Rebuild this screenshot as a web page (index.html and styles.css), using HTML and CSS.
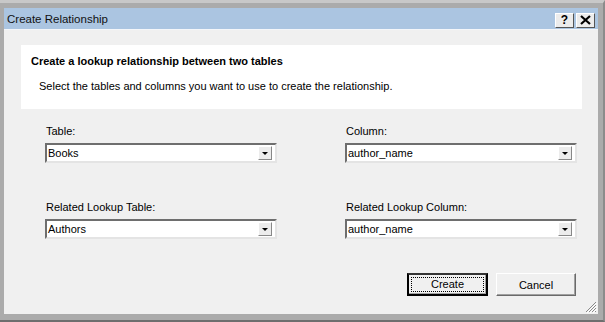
FILE: index.html
```html
<!DOCTYPE html>
<html lang="en">
<head>
    <meta charset="UTF-8">
    <title>Create Relationship</title>
    <link rel="stylesheet" href="styles.css">
</head>
<body>

    <div class="window">
        <div class="titlebar">
            <span class="title">Create Relationship</span>
            <div class="caption-buttons">
                <span class="cap-btn">?</span>
                <span class="cap-btn">
                    <svg width="11" height="10" viewBox="0 0 11 10"><path d="M1 1 L10 9 M10 1 L1 9" stroke="#000" stroke-width="2.2"/></svg>
                </span>
            </div>
        </div>

        <div class="client">
            <div class="header-panel">
                <h1>Create a lookup relationship between two tables</h1>
                <p>Select the tables and columns you want to use to create the relationship.</p>
            </div>

            <div class="fields">
                <div class="field">
                    <label>Table:</label>
                    <div class="combo"><span class="combo-text">Books</span><span class="combo-btn"></span></div>
                </div>
                <div class="field">
                    <label>Column:</label>
                    <div class="combo"><span class="combo-text">author_name</span><span class="combo-btn"></span></div>
                </div>
                <div class="field">
                    <label>Related Lookup Table:</label>
                    <div class="combo"><span class="combo-text">Authors</span><span class="combo-btn"></span></div>
                </div>
                <div class="field">
                    <label>Related Lookup Column:</label>
                    <div class="combo"><span class="combo-text">author_name</span><span class="combo-btn"></span></div>
                </div>
            </div>

            <div class="actions">
                <button class="btn btn-default"><span class="focus">Create</span></button>
                <button class="btn">Cancel</button>
            </div>

            <div class="grip">
                <svg width="12" height="12" viewBox="0 0 12 12">
                    <path d="M11 1 L1 11 M11 4 L4 11 M11 7 L7 11 M11 10 L10 11" stroke="#8a8a8a" stroke-width="1"/>
                    <path d="M12 2 L2 12 M12 5 L5 12 M12 8 L8 12" stroke="#ffffff" stroke-width="1"/>
                </svg>
            </div>
        </div>
    </div>

</body>
</html>
```

FILE: styles.css
```css
/* dialog frame */
body {
    margin: 0;
    width: 605px;
    height: 322px;
    overflow: hidden;
    background: #ababab;
    font-family: 'Liberation Sans', Arial, sans-serif;
    font-size: 11px;
    color: #000;
}

.window {
    box-sizing: border-box;
    width: 605px;
    height: 322px;
    padding: 5px 5px 6px 4px;
    border-top: 3px solid #c8c8c8;
    border-right: 2px solid #8c8c8c;
    border-bottom: 2px solid #6e6e6e;
    display: flex;
    flex-direction: column;
}

.titlebar {
    height: 21px;
    background: #abc5e1;
    border-bottom: 1px solid #f4f6f9;
    display: flex;
    align-items: center;
    justify-content: space-between;
    padding: 0 3px 0 3px;
}

.title {
    font-size: 11.5px;
    color: #111;
}

.caption-buttons {
    display: flex;
    gap: 2px;
    padding-top: 3px;
}

.cap-btn {
    box-sizing: border-box;
    width: 19px;
    height: 15px;
    background: #ececec;
    border: 1px solid;
    border-color: #fff #555 #555 #fff;
    display: flex;
    align-items: center;
    justify-content: center;
    font-weight: bold;
    font-size: 12px;
    line-height: 1;
}

.client {
    flex: 1;
    background: #f0f0f0;
    position: relative;
    padding: 15px 16px 0 17px;
}

.header-panel {
    background: #fff;
    height: 64px;
    box-sizing: border-box;
    padding: 9px 10px 0 10px;
}

.header-panel h1 {
    margin: 0;
    font-size: 11px;
    font-weight: bold;
    line-height: 14px;
}

.header-panel p {
    margin: 11px 0 0 8px;
    line-height: 14px;
}

.fields {
    display: grid;
    grid-template-columns: 232px 232px;
    column-gap: 68px;
    row-gap: 37px;
    margin: 15px 0 0 24px;
}

.field label {
    display: block;
    padding-left: 1px;
    line-height: 14px;
    margin-bottom: 5px;
}

.combo {
    box-sizing: border-box;
    height: 20px;
    background: #fff;
    border: 2px solid;
    border-color: #6e6e6e #e4e4e4 #e4e4e4 #6e6e6e;
    display: flex;
    align-items: center;
    justify-content: space-between;
    padding: 0 3px 0 1px;
}

.combo-text {
    font-size: 11px;
}

.combo-btn {
    box-sizing: border-box;
    width: 14px;
    height: 14px;
    background: #ececec;
    border: 1px solid;
    border-color: #fff #888 #888 #fff;
    position: relative;
}

.combo-btn::after {
    content: "";
    position: absolute;
    left: 3px;
    top: 5px;
    border-left: 3px solid transparent;
    border-right: 3px solid transparent;
    border-top: 3px solid #000;
}

.actions {
    display: flex;
    justify-content: flex-end;
    gap: 8px;
    margin: 34px 6px 0 0;
}

.btn {
    box-sizing: border-box;
    width: 80px;
    height: 23px;
    background: #f0f0f0;
    border: 1px solid;
    border-color: #fff #6a6a6a #6a6a6a #fff;
    box-shadow: inset -1px -1px 0 #a0a0a0;
    font-family: inherit;
    font-size: 11px;
    padding: 0;
}

.btn-default {
    width: 81px;
    border: 2px solid #000;
    border-top-color: #333;
    padding: 2px;
}

.btn-default .focus {
    display: block;
    height: 100%;
    box-sizing: border-box;
    border: 1px dotted #000;
    line-height: 13px;
}

.grip {
    position: absolute;
    right: 1px;
    bottom: 1px;
    width: 12px;
    height: 12px;
}
```
